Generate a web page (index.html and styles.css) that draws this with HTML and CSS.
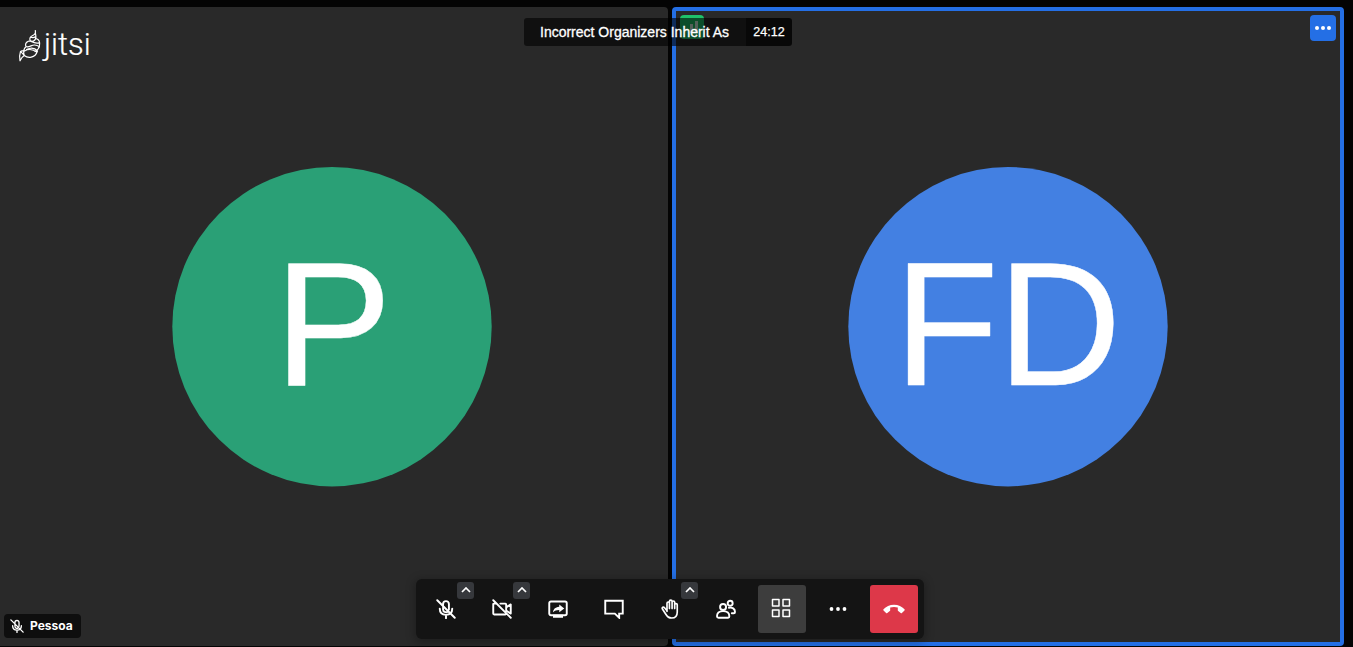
FILE: index.html
```html
<!DOCTYPE html>
<html lang="en">
<head>
<meta charset="utf-8">
<title>Incorrect Organizers Inherit As</title>
<link rel="stylesheet" href="styles.css">
</head>
<body>
<main class="conference">
  <section class="tile tile-left">
    <svg class="avatar" viewBox="0 0 320 320"><circle class="avatar-green" cx="160" cy="159.700" r="159.700"/><text class="initials" x="102" y="218.3">P</text></svg>
    <div class="name-label">
      <svg class="name-mic" viewBox="0 0 24 24"><use href="#mic-off"/></svg>
      <span class="name-text">Pessoa</span>
    </div>
  </section>
  <section class="tile tile-active">
    <svg class="avatar" viewBox="0 0 320 320"><circle class="avatar-blue" cx="160" cy="159.700" r="159.700"/><text class="initials" transform="translate(46 218.3) scale(.97 1)" x="0 106.7">FD</text></svg>
    <div class="signal"><i class="bar bar-low"></i><i class="bar bar-mid"></i><i class="bar bar-high"></i></div>
    <button class="tile-menu" aria-label="More"><i></i><i></i><i></i></button>
  </section>

  <div class="watermark">
    <svg class="logo-mark" viewBox="0 0 24 36">
      <path d="M17.300 2.500c.8 3-.6 4.200-2.600 5-3 1.200-3.500 3.500-2.200 5.300 2.500 1.300 5-.4 5.400-3.500.2-1.600-.4-2.800-.6-4.800M12.800 9.300c1.800.8 3.500.4 5-.8M12.500 12.800c-2.800.2-5 2-5 4.500.2 2 2.500 2 5.500.6 2.500-1.200 6-1 8.500 1M18 10.500c3.300 1 4.200 3.800 3.400 7.500-.4 3-2.700 4.500-4.400 5.500M13 13.500c3 1.300 5.500 2 8 1.300M8.300 18.500C5 21 5.500 25 6.300 27.500c3.500 3 10.700 3 13.200-4.500-2.500-3-6.500-3.800-11-1.500M6.500 23c4.500-2.500 9-1.500 12.500 1.200M6.300 27.500c-2.500 1.500-3.500 3.200-4.300 5.300-.8-3.300-.3-6.800.5-9.300 1.200.8 2.500 2.500 3.800 4M2.500 23.500c1.300-.8 2.300-1 3.600-.8"/>
    </svg>
    <span class="logo-text">jitsi</span>
  </div>

  <header class="subject">
    <span class="subject-title">Incorrect Organizers Inherit As</span>
    <span class="subject-time">24:12</span>
  </header>

  <nav class="toolbar">
    <div class="tool">
      <svg class="icon" viewBox="0 0 24 24"><g id="mic-off" class="stroke"><path d="M8.500 9.500V6a3.500 3.500 0 0 1 7 0v6.500M8.500 10v2.500a3.500 3.500 0 0 0 5.500 2.800M4.500 11.500c0 4.800 3 7.500 7.500 7.500s7.500-2.700 7.500-7.500M12 19v4M1.500 1.500l21 21"/></g></svg>
      <span class="caret"><svg viewBox="0 0 10 6"><path d="M1 5l4-4 4 4"/></svg></span>
    </div>
    <div class="tool">
      <svg class="icon" viewBox="0 0 24 24"><path class="stroke" d="M5 5.500H2.500Q1.500 5.500 1.500 6.500v11q0 1 1 1H16q1 0 1-1M10 5.500h6q1 0 1 1V10l5.500-3.500v11L17 14v-4M1.500 1.500l21 21"/></svg>
      <span class="caret"><svg viewBox="0 0 10 6"><path d="M1 5l4-4 4 4"/></svg></span>
    </div>
    <div class="tool">
      <svg class="icon" viewBox="0 0 24 24"><rect class="stroke" x="1.500" y="3" width="21" height="16.500" rx="2"/><path class="fill" d="M6 19h12v3.500H6zM13.500 6.500l6 4.800-6 4.700v-2.800c-3.500 0-5.500.8-7.500 2.800.4-3.500 2.300-6.200 7.500-6.700z"/></svg>
    </div>
    <div class="tool">
      <svg class="icon" viewBox="0 0 24 24"><path class="stroke stroke-square" d="M1.500 2h21v15.500h-4.300v5L13 17.500H1.500z"/></svg>
    </div>
    <div class="tool">
      <svg class="icon icon-hand" viewBox="0 0 24 24"><path class="stroke hand" d="M7.200 15V5.200c0-2.200 2.900-2.200 2.900 0V3c0-2.300 3.200-2.300 3.200 0v1c0-2.200 3.100-2.200 3.100 0v3c0-2 3.100-2 3.100 0v8.500c0 4.500-2.700 7.300-6.700 7.300-3.300 0-5.300-1.500-7-4.500L1.700 12c-.9-1.900 1.200-3 2.500-1.500l3 3.600M10.100 5v6.500M13.300 4v7.500M16.400 6v5.500"/></svg>
      <span class="caret"><svg viewBox="0 0 10 6"><path d="M1 5l4-4 4 4"/></svg></span>
    </div>
    <div class="tool">
      <svg class="icon" viewBox="0 0 24 24"><g class="stroke"><circle cx="8.500" cy="9.500" r="3.600"/><path d="M3 22.500h11.500q1.500 0 1.500-1.800c0-4.400-3.200-6.200-7.500-6.200S1.200 16.300 1.200 20.700Q1.200 22.500 3 22.500z"/><circle cx="17" cy="5" r="3"/><path d="M15.500 10.500c4-.8 7.300 1.200 7.300 5q0 1.500-1.500 1.500H19"/></g></svg>
    </div>
    <div class="tool tool-selected">
      <svg class="icon icon-grid" viewBox="0 0 20 20"><g class="stroke"><rect x="1.500" y="1.500" width="6.500" height="6.500"/><rect x="12" y="1.500" width="6.500" height="6.500"/><rect x="1.500" y="12" width="6.500" height="6.500"/><rect x="12" y="12" width="6.500" height="6.500"/></g></svg>
    </div>
    <div class="tool">
      <svg class="icon" viewBox="0 0 20 20"><g class="fill"><circle cx="3.500" cy="10" r="1.900"/><circle cx="10" cy="10" r="1.900"/><circle cx="16.500" cy="10" r="1.900"/></g></svg>
    </div>
    <div class="tool tool-hangup">
      <svg class="hangup" viewBox="0 0 22 10"><path class="fill" d="M.5 5.300C3 2.500 6.700.7 11 .7s8 1.800 10.500 4.600c.3.400.3.800 0 1.100l-2.600 2.500c-.4.400-.8.300-1.200 0L15.200 7c-.3-.2-.4-.5-.4-.8V3.400c-2.500-.7-5.100-.7-7.600 0v2.800c0 .3-.1.600-.4.800L4.300 8.900c-.4.300-.8.400-1.200 0L.5 6.400c-.3-.3-.3-.7 0-1.100z"/></svg>
    </div>
  </nav>
</main>
</body>
</html>
```
FILE: styles.css
```css
* { box-sizing: border-box; }
body {
  margin: 0;
  background: #040404;
  color: #fff;
  font-family: "Liberation Sans", Arial, sans-serif;
}
.conference {
  position: relative;
  display: grid;
  grid-template-columns: 668px 672px;
  column-gap: 4px;
  height: 647px;
  padding: 7px 0 1px;
  overflow: hidden;
}
.tile {
  position: relative;
  display: flex;
  align-items: center;
  justify-content: center;
  background: #292929;
  border-radius: 4px;
}
.tile-left { padding-right: 4px; border-radius: 0 4px 4px 0; }
.tile-active { border: 4px solid #246fe5; }
.avatar { width: 320px; height: 320px; }
.avatar-green { fill: #2aa076; }
.avatar-blue { fill: #4380e2; }
.initials { font-size: 177px; fill: #fff; stroke: #fff; stroke-width: .4px; stroke-linejoin: round; }
.name-label {
  position: absolute;
  left: 4px;
  bottom: 8px;
  display: flex;
  align-items: center;
  gap: 6px;
  width: 77px;
  height: 24px;
  padding: 0 6px;
  border-radius: 4px;
  background: #0e0e0e;
  font: bold 12px Inter, sans-serif;
}
.name-mic { width: 14px; height: 14px; flex: none; }
.name-text { padding-bottom: 2px; }
.signal {
  position: absolute;
  left: 4px;
  top: 4px;
  display: flex;
  align-items: flex-end;
  justify-content: center;
  gap: 2px;
  width: 24px;
  height: 24px;
  padding: 0 1px 6px 0;
  border-radius: 4px;
  background: #1ec26a;
}
.bar { width: 3px; background: #fff; opacity: .8; }
.bar-low { height: 5px; opacity: .1; }
.bar-mid { height: 9px; }
.bar-high { height: 12px; }
.tile-menu {
  position: absolute;
  right: 4px;
  top: 4px;
  display: flex;
  align-items: center;
  justify-content: center;
  gap: 2px;
  width: 26px;
  height: 26px;
  padding: 0;
  border: 0;
  border-radius: 4px;
  background: #246fe5;
}
.tile-menu i { width: 4px; height: 4px; border-radius: 50%; background: #fff; }
.watermark {
  position: absolute;
  left: 18px;
  top: 28px;
  display: flex;
  align-items: flex-start;
  gap: 2px;
}
.logo-mark {
  width: 24px;
  height: 36px;
  fill: none;
  stroke: #fff;
  stroke-width: 1.2;
  stroke-linecap: round;
  stroke-linejoin: round;
}
.logo-text { font: 300 31px/33px Roboto, sans-serif; -webkit-text-stroke: .2px #fff; }
.subject {
  position: absolute;
  left: 524px;
  top: 18px;
  display: flex;
  width: 268px;
  height: 28px;
  border-radius: 3px;
  overflow: hidden;
  line-height: 28px;
  white-space: nowrap;
}
.subject-title { width: 222px; padding-left: 16px; background: rgba(0, 0, 0, .6); font-size: 14px; -webkit-text-stroke: .3px #fff; }
.subject-time { width: 46px; background: rgba(0, 0, 0, .8); text-align: center; font-size: 12.5px; -webkit-text-stroke: .25px #fff; }
.toolbar {
  position: absolute;
  left: 416px;
  top: 579px;
  display: flex;
  gap: 8px;
  width: 508px;
  height: 60px;
  padding: 6px;
  border-radius: 6px;
  background: #141414;
  box-shadow: 0 2px 8px 2px rgba(0, 0, 0, .25);
}
.tool {
  position: relative;
  display: flex;
  align-items: center;
  justify-content: center;
  width: 48px;
  height: 48px;
  border-radius: 3px;
}
.tool-selected { background: #3d3d3d; }
.tool-hangup { background: #dd3849; }
.icon { width: 20px; height: 20px; }
.icon-hand { transform: translateX(1px); }
.icon-grid { transform: translate(-1px, -1px); }
.hangup { width: 22px; height: 10px; }
.stroke { fill: none; stroke: #fff; stroke-width: 2.3; stroke-linecap: round; stroke-linejoin: round; }
.stroke-square { stroke-linejoin: miter; }
.icon-grid .stroke { stroke-width: 1.5; }
.hand { stroke-width: 2; }
.fill { fill: #fff; }
.caret {
  position: absolute;
  right: -4px;
  top: -3px;
  display: flex;
  align-items: center;
  justify-content: center;
  width: 17px;
  height: 17px;
  padding-bottom: 1px;
  border-radius: 3px;
  background: #36383c;
}
.caret svg { width: 10px; height: 6px; fill: none; stroke: #fff; stroke-width: 1.7; }
```
